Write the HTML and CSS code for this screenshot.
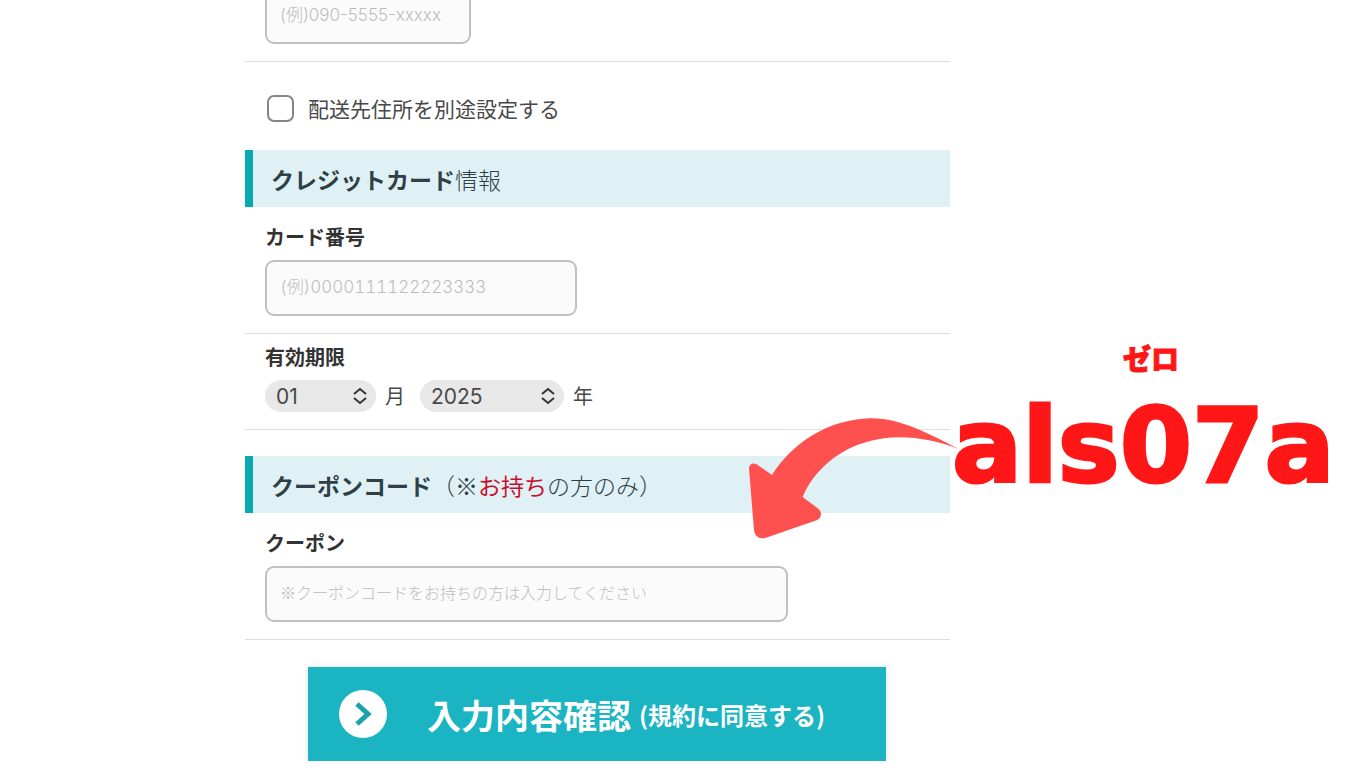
FILE: index.html
```
<!DOCTYPE html>
<html lang="ja">
<head>
    <meta charset="UTF-8">
    <title>お客様情報の入力</title>
    <link rel="stylesheet" href="styles.css">
</head>
<body>
<form class="order">
    <div class="row row-tel">
        <input class="text tel" type="tel" aria-label="電話番号" placeholder="(例)090-5555-xxxxx">
    </div>
    <div class="check">
        <input type="checkbox" id="other">
        <label for="other">配送先住所を別途設定する</label>
    </div>

    <!-- カード情報 -->
    <h2 class="title"><b>クレジットカード</b>情報</h2>
    <div class="row first">
        <label class="name" for="card">カード番号</label>
        <input class="text card" type="text" id="card" placeholder="(例)0000111122223333">
    </div>
    <div class="row">
        <label class="name" for="month">有効期限</label>
        <div class="limit">
            <span class="select month">
                <select id="month"><option>01</option><option>02</option><option>03</option></select>
                <svg viewBox="0 0 14 18"><path d="M1 7l6-5 6 5M1 11l6 5 6-5"/></svg>
            </span>
            <label class="unit" for="month">月</label>
            <span class="select year">
                <select id="year"><option>2025</option><option>2026</option><option>2027</option></select>
                <svg viewBox="0 0 14 18"><path d="M1 7l6-5 6 5M1 11l6 5 6-5"/></svg>
            </span>
            <label class="unit" for="year">年</label>
        </div>
    </div>

    <!-- クーポン -->
    <div class="coupon-area">
        <h2 class="title"><b>クーポンコード</b>（※<em>お持ち</em>の方のみ）</h2>
        <div class="row first">
            <label class="name" for="coupon">クーポン</label>
            <input class="text coupon" type="text" id="coupon" placeholder="※クーポンコードをお持ちの方は入力してください">
        </div>
        <svg class="arrow" viewBox="54 260 636 366">
            <path d="M686 356C610 324 500 308 420 332C325 356 252 420 218 500L266 536Q282 554 262 569L108 622Q77 630 72 600L57 414Q60 394 80 402L126 434C190 335 295 268 420 264C510 262 600 312 686 356Z"/>
        </svg>
        <p class="kana">ゼロ</p>
        <p class="code">als07a</p>
    </div>

    <button class="submit" type="submit">
        <svg viewBox="0 0 48 48"><circle cx="24" cy="24" r="24"/><path d="M18 14l11 10-11 10"/></svg>
        <span class="big">入力内容確認</span>
        <span class="small">(規約に同意する)</span>
    </button>
</form>
</body>
</html>
```
FILE: styles.css
```
*{
    margin: 0;
    padding: 0;
    box-sizing: border-box;
}
body{
    background: #fff;
    color: #484848;
    font-family: "Noto Sans CJK JP", sans-serif;
    overflow: hidden;
}
.order{
    margin: -12px 410px 0 245px;
}
.row{
    padding: 8px 20px 17px;
    border-bottom: 1px solid #dedede;
}
.row-tel{
    padding-top: 0;
}
.first{
    padding-top: 15px;
}
.name{
    display: block;
    margin-bottom: 8px;
    font-size: 20px;
    font-weight: bold;
    line-height: 30px;
    color: #333;
}
.text{
    display: block;
    max-width: 100%;
    height: 56px;
    padding: 0 13px 2px;
    border: 2px solid #c0c0c0;
    border-radius: 9px;
    background: #fbfbfb;
    font-family: Inter, "Noto Sans CJK JP", sans-serif;
    font-size: 17px;
    font-weight: 300;
}
.text::placeholder{
    color: #bdbdbd;
    opacity: 1;
}
.tel{
    width: 206px;
}
.card{
    width: 312px;
    font-variant-numeric: tabular-nums;
}
.coupon{
    width: 523px;
    padding-bottom: 4px;
    font-family: "Noto Sans CJK JP", sans-serif;
    font-size: 16px;
}
.check{
    display: flex;
    align-items: center;
    gap: 14px;
    height: 88px;
    padding: 4px 22px 0;
    font-size: 21px;
}
.check input{
    appearance: none;
    width: 27px;
    height: 27px;
    border: 2px solid #858585;
    border-radius: 7px;
    background: #fff;
}
.title{
    padding: 2px 0 0 18px;
    border-left: 8px solid #09a9b2;
    background: #e0f1f6;
    font-size: 23px;
    font-weight: 300;
    line-height: 55px;
    color: #2f3f46;
}
.title b{
    font-weight: bold;
}
.title em{
    font-style: normal;
    font-weight: normal;
    color: #c8102e;
}
.limit{
    display: flex;
    align-items: center;
    gap: 9px;
}
.select{
    position: relative;
    height: 32px;
}
.select select{
    appearance: none;
    width: 100%;
    height: 32px;
    padding: 0 11px;
    border: 0;
    border-radius: 16px;
    background: #e8e8e8;
    color: #484848;
    font-family: Inter, "Noto Sans CJK JP", sans-serif;
    font-size: 21px;
    font-weight: normal;
}
.select svg{
    position: absolute;
    top: 7px;
    right: 9px;
    width: 14px;
    height: 18px;
    fill: none;
    stroke: #333;
    stroke-width: 2;
    pointer-events: none;
}
.month{
    width: 111px;
}
.year{
    width: 144px;
    margin-left: 6px;
}
.unit{
    font-size: 20px;
    line-height: 32px;
}
.coupon-area{
    position: relative;
    margin-top: 26px;
}
/* 矢印とコード */
.arrow{
    position: absolute;
    top: -39px;
    right: -10px;
    width: 212px;
    height: 122px;
    fill: #ff5050;
}
.code,
.kana{
    position: absolute;
    left: 100%;
    color: #ff1616;
    font-weight: 900;
    white-space: nowrap;
    -webkit-text-stroke: 3px #ff1616;
    stroke-linejoin: round;
}
.code{
    top: -70px;
    margin-left: 2px;
    font-family: "DejaVu Sans", sans-serif;
    font-weight: bold;
    font-size: 104px;
    line-height: 120px;
}
.kana{
    top: -118px;
    margin-left: 173px;
    font-size: 28px;
    line-height: 40px;
    -webkit-text-stroke-width: 1px;
}
.submit{
    display: flex;
    align-items: center;
    width: 82%;
    height: 94px;
    margin: 27px 0 0 63px;
    padding: 0 31px;
    border: 0;
    background: #1ab4c2;
    box-shadow: 0 0 6px #d5e6e8;
    color: #fff;
    font-family: "Noto Sans CJK JP", sans-serif;
    font-weight: bold;
    white-space: nowrap;
}
.submit svg{
    width: 48px;
    height: 48px;
    margin-right: 40px;
    fill: #fff;
}
.submit path{
    fill: none;
    stroke: #1aa3ac;
    stroke-width: 5;
}
.big{
    font-size: 34px;
}
.small{
    margin-left: 8px;
    font-size: 24px;
}
```
